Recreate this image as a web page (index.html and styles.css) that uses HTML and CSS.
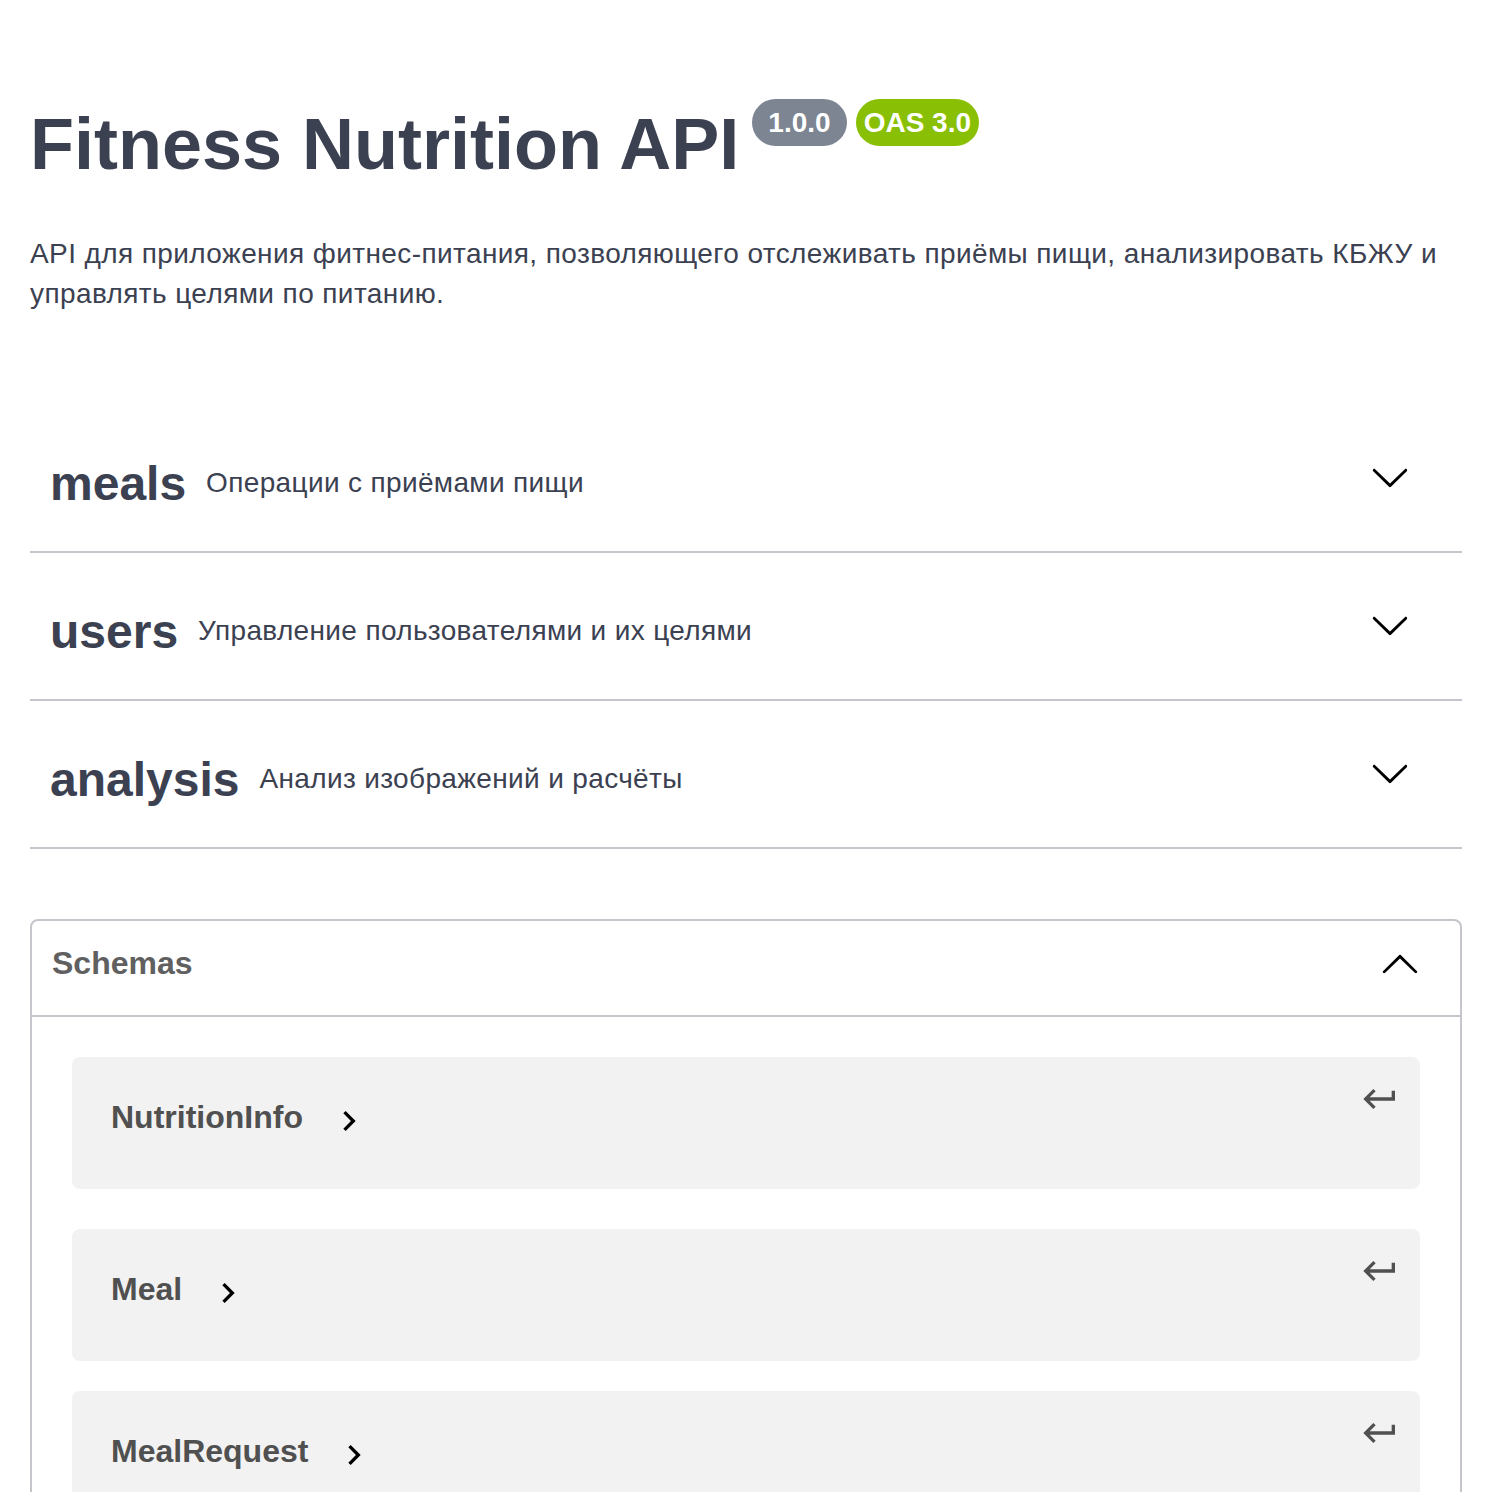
FILE: index.html
```html
<!DOCTYPE html>
<html lang="ru">
<head>
<meta charset="utf-8">
<title>Fitness Nutrition API</title>
<link rel="stylesheet" href="styles.css">
</head>
<body>
<div class="wrapper">
  <section class="info">
    <div class="title-row">
      <h2 class="title">Fitness Nutrition API</h2>
      <span class="badge badge-version">1.0.0</span>
      <span class="badge badge-oas">OAS 3.0</span>
    </div>
    <p class="description">API для приложения фитнес-питания, позволяющего отслеживать приёмы пищи, анализировать КБЖУ и управлять целями по питанию.</p>
  </section>

  <section class="tags">
    <div class="tag-row">
      <span class="tag-name">meals</span>
      <span class="tag-desc">Операции с приёмами пищи</span>
      <span class="tag-spacer"></span>
      <svg class="tag-arrow" viewBox="0 0 20 20" width="40" height="40"><path d="M17.418 6.109c.272-.268.709-.268.979 0s.271.701 0 .969l-7.908 7.83c-.27.268-.707.268-.979 0l-7.908-7.83c-.27-.268-.27-.701 0-.969.271-.268.709-.268.979 0L10 13.25l7.418-7.141z"/></svg>
    </div>
    <div class="tag-row">
      <span class="tag-name">users</span>
      <span class="tag-desc">Управление пользователями и их целями</span>
      <span class="tag-spacer"></span>
      <svg class="tag-arrow" viewBox="0 0 20 20" width="40" height="40"><path d="M17.418 6.109c.272-.268.709-.268.979 0s.271.701 0 .969l-7.908 7.83c-.27.268-.707.268-.979 0l-7.908-7.83c-.27-.268-.27-.701 0-.969.271-.268.709-.268.979 0L10 13.25l7.418-7.141z"/></svg>
    </div>
    <div class="tag-row">
      <span class="tag-name">analysis</span>
      <span class="tag-desc">Анализ изображений и расчёты</span>
      <span class="tag-spacer"></span>
      <svg class="tag-arrow" viewBox="0 0 20 20" width="40" height="40"><path d="M17.418 6.109c.272-.268.709-.268.979 0s.271.701 0 .969l-7.908 7.83c-.27.268-.707.268-.979 0l-7.908-7.83c-.27-.268-.27-.701 0-.969.271-.268.709-.268.979 0L10 13.25l7.418-7.141z"/></svg>
    </div>
  </section>

  <section class="models">
    <div class="models-header">
      <span class="models-title">Schemas</span>
      <svg class="models-arrow" viewBox="0 0 20 20" width="40" height="40"><path d="M17.418 14.908c.272.268.709.268.979 0s.271-.701 0-.969l-7.908-7.83c-.27-.268-.707-.268-.979 0l-7.908 7.83c-.27.268-.27.701 0 .969.271.268.709.268.979 0L10 7.767l7.418 7.141z"/></svg>
    </div>
    <div class="models-body">
      <div class="model-box">
        <span class="model-title">NutritionInfo</span>
        <svg class="model-toggle" viewBox="0 0 24 24" width="40" height="40"><path d="M10 6 8.59 7.41 13.17 12l-4.58 4.59L10 18l6-6z"/></svg>
        <svg class="model-jump" viewBox="0 0 24 24" width="40" height="40"><path d="M19 7v4H5.83l3.58-3.59L8 6l-6 6 6 6 1.41-1.41L5.830 13H21V7z"/></svg>
      </div>
      <div class="model-box">
        <span class="model-title">Meal</span>
        <svg class="model-toggle" viewBox="0 0 24 24" width="40" height="40"><path d="M10 6 8.59 7.41 13.17 12l-4.58 4.59L10 18l6-6z"/></svg>
        <svg class="model-jump" viewBox="0 0 24 24" width="40" height="40"><path d="M19 7v4H5.83l3.58-3.59L8 6l-6 6 6 6 1.41-1.41L5.83 13H21V7z"/></svg>
      </div>
      <div class="model-box">
        <span class="model-title">MealRequest</span>
        <svg class="model-toggle" viewBox="0 0 24 24" width="40" height="40"><path d="M10 6 8.59 7.41 13.17 12l-4.58 4.59L10 18l6-6z"/></svg>
        <svg class="model-jump" viewBox="0 0 24 24" width="40" height="40"><path d="M19 7v4H5.83l3.58-3.59L8 6l-6 6 6 6 1.41-1.41L5.83 13H21V7z"/></svg>
      </div>
    </div>
  </section>
</div>
</body>
</html>
```

FILE: styles.css
```css
html, body {
  margin: 0;
  padding: 0;
  background: #ffffff;
}

body {
  font-family: "Liberation Sans", Arial, Helvetica, sans-serif;
  color: #3b4151;
}

.wrapper {
  padding: 99px 40px 0 30px;
}

/* ---------- info ---------- */
.title-row {
  display: flex;
  align-items: flex-start;
}

.title {
  margin: 9px 0 0 0;
  font-size: 72px;
  line-height: 72px;
  font-weight: 700;
  color: #3b4151;
}

.badge {
  display: inline-block;
  height: 47px;
  line-height: 47px;
  border-radius: 24px;
  font-size: 28px;
  font-weight: 700;
  color: #ffffff;
}

.badge-version {
  margin-left: 13px;
  padding: 0 16px;
  background: #7d8492;
}

.badge-oas {
  margin-left: 9px;
  padding: 0 8px;
  background: #89bf04;
}

.description {
  margin: 54px 0 0 0;
  font-size: 28px;
  line-height: 40px;
  letter-spacing: 0.4px;
  color: #3b4151;
}

/* ---------- tags ---------- */
.tags {
  margin-top: 101px;
}

.tag-row {
  display: flex;
  align-items: center;
  height: 136px;
  padding: 0 52px 0 20px;
  border-bottom: 2px solid #c4c6cb;
  margin-bottom: 10px;
}

.tag-name {
  font-size: 48px;
  font-weight: 700;
  color: #3b4151;
}

.tag-desc {
  margin-left: 20px;
  font-size: 28px;
  letter-spacing: 0.35px;
  color: #3b4151;
}

.tag-spacer {
  flex: 1;
}

.tag-arrow {
  display: block;
  margin-bottom: 13px;
  fill: #000000;
}

/* ---------- models ---------- */
.models {
  margin-top: 70px;
  border: 2px solid #c4c6cb;
  border-radius: 8px;
  padding-bottom: 40px;
}

.models-header {
  display: flex;
  align-items: center;
  justify-content: space-between;
  box-sizing: border-box;
  height: 96px;
  padding: 0 40px 10px 20px;
  border-bottom: 2px solid #c4c6cb;
}

.models-title {
  font-size: 32px;
  font-weight: 700;
  color: #606060;
}

.models-arrow {
  display: block;
  fill: #000000;
}

.models-body {
  padding-top: 40px;
}

.model-box {
  position: relative;
  display: flex;
  align-items: center;
  box-sizing: border-box;
  height: 132px;
  margin: 0 40px 30px;
  padding: 0 80px 11px 39px;
  border-radius: 8px;
  background: #f2f2f2;
}

.model-box:first-child {
  margin-bottom: 40px;
}

.model-title {
  font-size: 32px;
  font-weight: 700;
  color: #505050;
}

.model-toggle {
  display: block;
  margin: 7px 0 0 26px;
  fill: #000000;
}

.model-jump {
  position: absolute;
  top: 22px;
  right: 20px;
  fill: #505050;
}
```
